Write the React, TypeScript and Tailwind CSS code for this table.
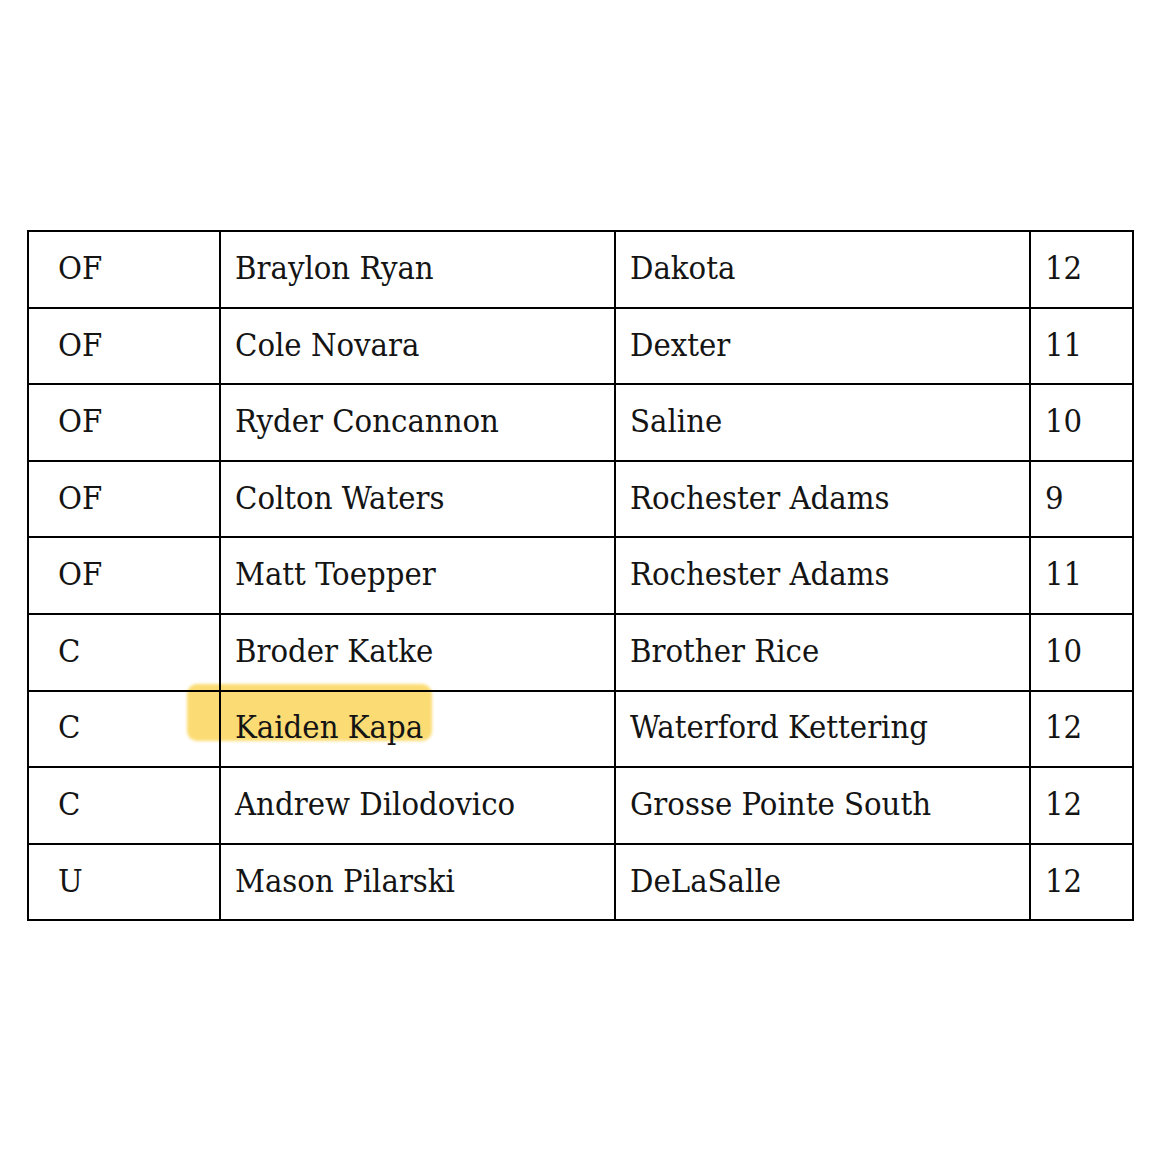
import React from "react";

const rows: [string, string, string, string][] = [
  ["OF", "Braylon Ryan", "Dakota", "12"],
  ["OF", "Cole Novara", "Dexter", "11"],
  ["OF", "Ryder Concannon", "Saline", "10"],
  ["OF", "Colton Waters", "Rochester Adams", "9"],
  ["OF", "Matt Toepper", "Rochester Adams", "11"],
  ["C", "Broder Katke", "Brother Rice", "10"],
  ["C", "Kaiden Kapa", "Waterford Kettering", "12"],
  ["C", "Andrew Dilodovico", "Grosse Pointe South", "12"],
  ["U", "Mason Pilarski", "DeLaSalle", "12"],
];

export default function App() {
  return (
    <div
      className="w-[1170px] h-[1160px] bg-white pt-[230px] pl-[27px] text-[#141414]"
      style={{ fontFamily: '"DejaVu Serif Condensed", "DejaVu Serif", serif', fontStretch: "condensed" }}
    >
      <div className="relative w-[1105px]">
        {/* highlighter mark, sits under the grid lines */}
        <div className="absolute left-[160px] top-[454px] w-[245px] h-[57px] rounded-[10px] bg-[#fbdc74] blur-[1.5px]" />
        <table className="relative border-collapse w-[1105px] table-fixed">
          <colgroup>
            <col className="w-[192px]" />
            <col className="w-[395px]" />
            <col className="w-[415px]" />
            <col className="w-[103px]" />
          </colgroup>
          <tbody>
            {rows.map((r, i) => (
              <tr key={i} className="h-[76.6px]">
                <td className="border-2 border-black pl-[29px] pb-[2px] text-[32.5px] align-middle">{r[0]}</td>
                <td className="border-2 border-black pl-[14px] pb-[2px] text-[32.5px] align-middle">{r[1]}</td>
                <td className="border-2 border-black pl-[14px] pb-[2px] text-[32.5px] align-middle">{r[2]}</td>
                <td className="border-2 border-black pl-[14px] pb-[2px] text-[32.5px] align-middle">{r[3]}</td>
              </tr>
            ))}
          </tbody>
        </table>
      </div>
    </div>
  );
}
